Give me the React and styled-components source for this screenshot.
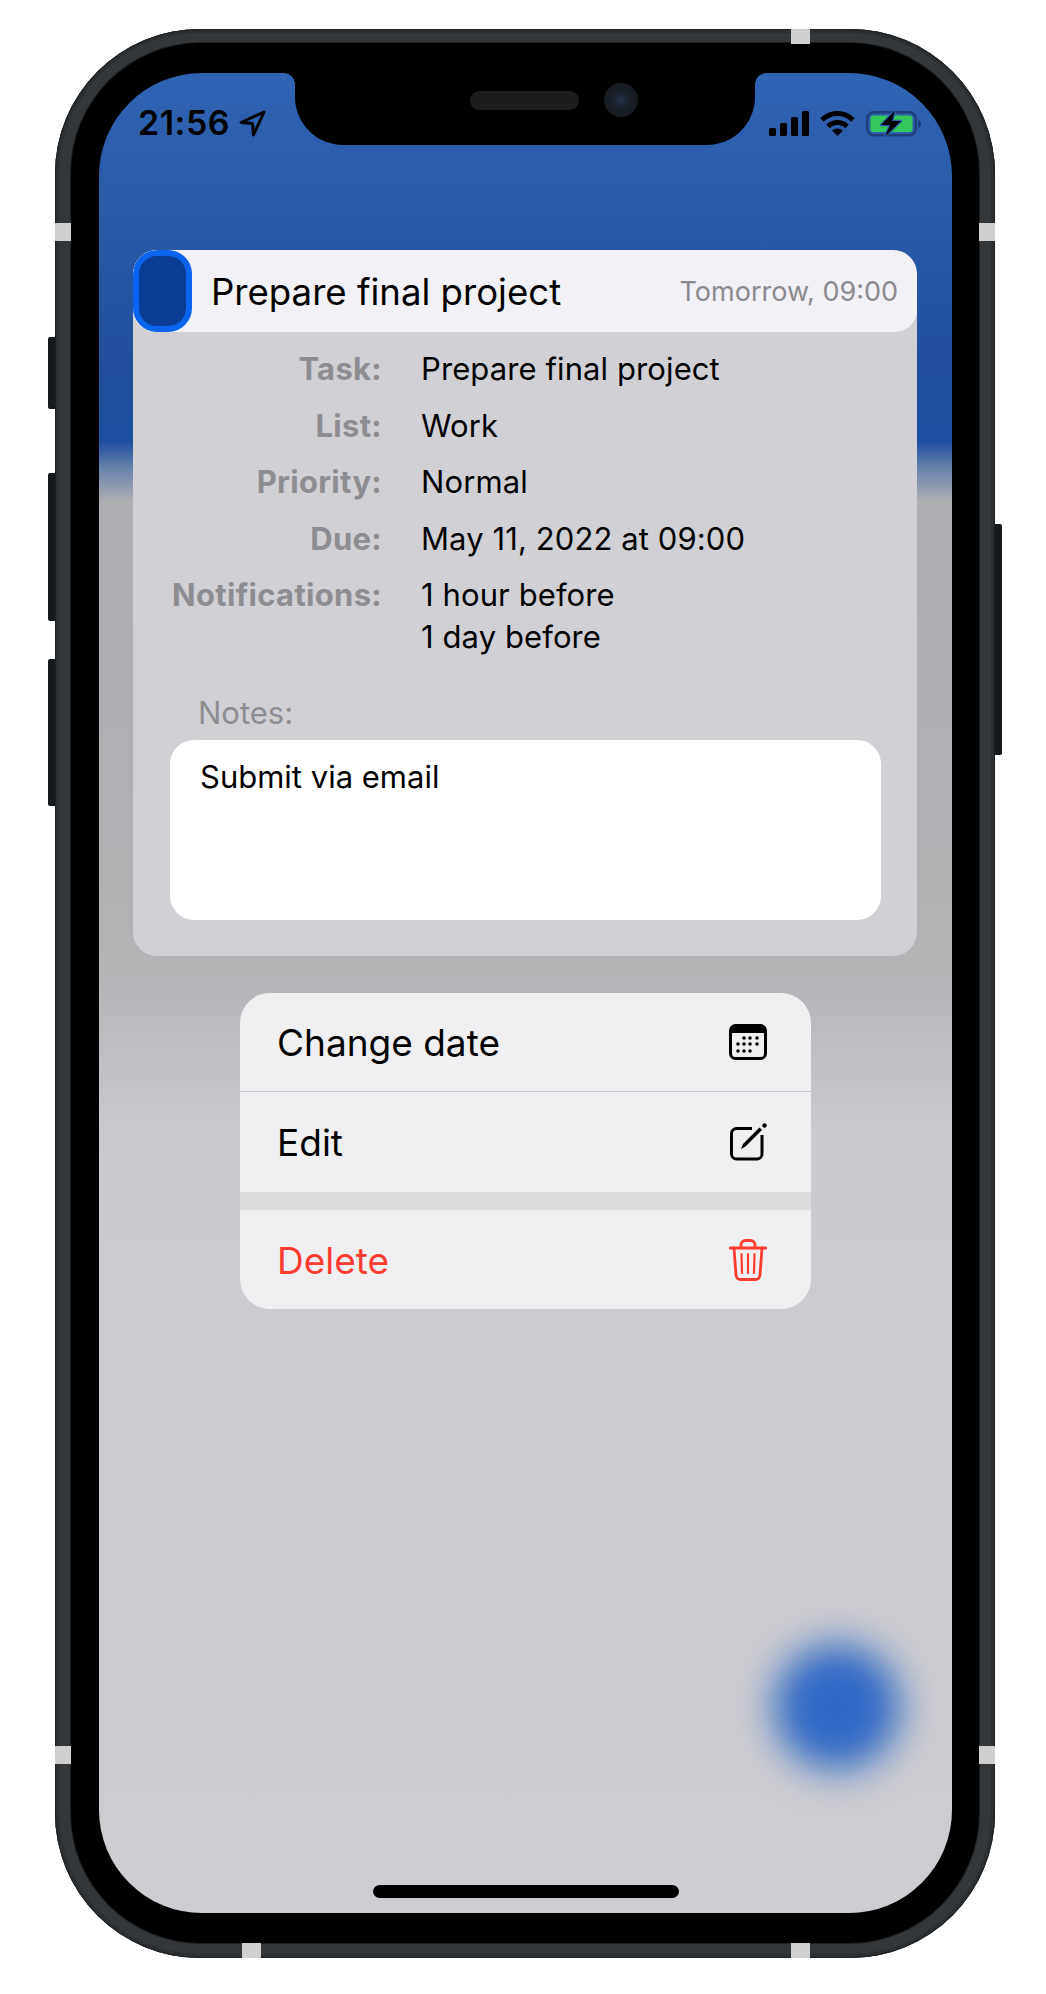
import React from "react";
import styled, { createGlobalStyle } from "styled-components";

const Global = createGlobalStyle`
  html, body { margin: 0; padding: 0; background: #fff; }
  body { font-family: Inter, "Liberation Sans", sans-serif; color: #000; }
`;

const Page = styled.div`
  width: 1046px;
  height: 1994px;
  padding: 29px 0 0 55px;
  box-sizing: border-box;
  overflow: hidden;
`;

const Phone = styled.div`
  position: relative;
  width: 940px;
  height: 1929px;
  box-sizing: border-box;
  padding: 14px 16px 15px 16px;
  border-radius: 145px;
  background: #33373a;
  box-shadow: inset 0 0 0 1px #1d2022, inset 0 0 0 4px #2b2f32;
`;

const Bezel = styled.div`
  height: 100%;
  box-sizing: border-box;
  padding: 30px 27px 30px 28px;
  border-radius: 130px;
  background: #000;
  box-shadow: 0 0 0 1px #1c1f22;
`;

const Screen = styled.div`
  position: relative;
  height: 100%;
  border-radius: 103px;
  overflow: hidden;
  display: flex;
  flex-direction: column;
  background: linear-gradient(
    180deg,
    #2f64b4 0,
    #2a5ca9 120px,
    #1f4f9c 300px,
    #1b4e9f 368px,
    #6a83ab 396px,
    #adaeb2 428px,
    #b1b1b4 800px,
    #b4b4b7 900px,
    #cbcacf 1060px,
    #cecdd2 1840px
  );
`;

const Notch = styled.div`
  position: absolute;
  top: 0;
  left: 196px;
  width: 460px;
  height: 72px;
  background: #000;
  border-radius: 0 0 48px 48px;
  &::before, &::after {
    content: "";
    position: absolute;
    top: 0;
    width: 11px;
    height: 11px;
  }
  &::before {
    left: -11px;
    background: radial-gradient(circle at 0 100%, transparent 10.5px, #000 11px);
  }
  &::after {
    right: -11px;
    background: radial-gradient(circle at 100% 100%, transparent 10.5px, #000 11px);
  }
`;

const Speaker = styled.div`
  position: absolute;
  top: 18px;
  left: 175px;
  width: 109px;
  height: 19px;
  border-radius: 10px;
  background: #1d1d1e;
`;

const Camera = styled.div`
  position: absolute;
  top: 10px;
  left: 309px;
  width: 34px;
  height: 34px;
  border-radius: 50%;
  background: radial-gradient(circle, #23344a 0, #1a2029 35%, #15171a 100%);
`;

const StatusBar = styled.div`
  flex: none;
  height: 177px;
  box-sizing: border-box;
  padding: 36px 31px 0 39px;
  display: flex;
  justify-content: space-between;
  align-items: flex-start;
`;

const TimeGroup = styled.div`
  display: flex;
  align-items: center;
  gap: 9px;
  height: 28px;
`;

const Time = styled.span`
  font-size: 34px;
  font-weight: 600;
  line-height: 28px;
  letter-spacing: 0.5px;
  color: #000;
`;

const StatusIcons = styled.div`
  display: flex;
  align-items: center;
  gap: 11px;
  height: 28px;
`;

const Card = styled.section`
  flex: none;
  margin: 0 35px 0 34px;
  height: 706px;
  display: flex;
  flex-direction: column;
  border-radius: 24px;
  overflow: hidden;
  background: #d1d0d5;
`;

const CardHeader = styled.header`
  flex: none;
  height: 82px;
  display: flex;
  align-items: center;
  background: #f2f1f6;
  border-radius: 24px 24px 22px 22px;
`;

const Swatch = styled.div`
  flex: none;
  width: 59px;
  height: 82px;
  box-sizing: border-box;
  border: 6px solid #0a64ee;
  border-radius: 24px;
  background: #093c93;
`;

const Title = styled.h1`
  flex: 1;
  margin: 0 0 0 19px;
  padding-top: 1px;
  font-size: 36.6px;
  font-weight: 400;
  line-height: 44px;
  color: #000;
`;

const When = styled.span`
  margin-right: 19px;
  font-size: 27px;
  font-weight: 400;
  color: #8a8a8e;
`;

const Details = styled.dl`
  flex: none;
  margin: 0;
  padding: 16px 0 0 0;
  display: grid;
  grid-template-columns: 249px 1fr;
  column-gap: 39px;
  row-gap: 14.5px;
`;

const Label = styled.dt`
  text-align: right;
  font-size: 31px;
  font-weight: 700;
  line-height: 42px;
  letter-spacing: 0.3px;
  color: #8d8d91;
`;

const Value = styled.dd`
  margin: 0;
  font-size: 31px;
  font-weight: 400;
  line-height: 42px;
  letter-spacing: 0.1px;
  color: #000;
`;

const NotesLabel = styled.div`
  margin: 34px 0 0 65px;
  font-size: 31px;
  line-height: 42px;
  color: #8d8d91;
`;

const NotesBox = styled.div`
  flex: none;
  margin: 6px 36px 0 37px;
  height: 180px;
  box-sizing: border-box;
  padding: 16px 30px;
  border-radius: 24px;
  background: #fff;
  font-size: 31px;
  line-height: 42px;
  color: #000;
`;

const Menu = styled.nav`
  flex: none;
  margin: 37px 0 0 141px;
  width: 571px;
  border-radius: 30px;
  overflow: hidden;
  background: #f0f0f2;
`;

const MenuRow = styled.div`
  height: ${(p) => p.$h}px;
  box-sizing: border-box;
  padding: 0 44px 0 37px;
  display: flex;
  align-items: center;
  justify-content: space-between;
  font-size: 37px;
  color: ${(p) => (p.$danger ? "#ff3b30" : "#000")};
  border-bottom: ${(p) => (p.$line ? "1px solid #c8c8cc" : "none")};
`;

const MenuLabel = styled.span`
  display: block;
  padding-top: 1px;
`;

const MenuGap = styled.div`
  height: 18px;
  background: #dcdcde;
`;

const Fab = styled.div`
  position: absolute;
  top: 1571px;
  left: 675px;
  width: 126px;
  height: 126px;
  border-radius: 50%;
  background: #2d68c5;
  filter: blur(19px);
`;

const HomeBar = styled.div`
  position: absolute;
  left: 274px;
  bottom: 15px;
  width: 306px;
  height: 13px;
  border-radius: 7px;
  background: #000;
`;

const Band = styled.div`
  position: absolute;
  background: #cfcfcf;
  ${(p) => (p.$top !== undefined ? `top:${p.$top}px;` : "")}
  ${(p) => (p.$left !== undefined ? `left:${p.$left}px;` : "")}
  ${(p) => (p.$right !== undefined ? `right:${p.$right}px;` : "")}
  ${(p) => (p.$bottom !== undefined ? `bottom:${p.$bottom}px;` : "")}
  width: ${(p) => (p.$horizontal ? 16 : 19)}px;
  height: ${(p) => (p.$horizontal ? 18 : 15)}px;
`;

const SideButton = styled.div`
  position: absolute;
  top: ${(p) => p.$top}px;
  ${(p) => (p.$side === "right" ? "right: -7px;" : "left: -7px;")}
  width: 7px;
  height: ${(p) => p.$h}px;
  background: #16191b;
  border-radius: ${(p) => (p.$side === "right" ? "0 2px 2px 0" : "2px 0 0 2px")};
`;

const Location = () => (
  <svg width="27" height="27" viewBox="0 0 27 27" fill="none">
    <path d="M25 2 L2 12.5 L13.5 13.5 L14.5 25 Z" stroke="#000" strokeWidth="3" strokeLinejoin="round" />
  </svg>
);

const Signal = () => (
  <svg width="40" height="25" viewBox="0 0 40 25">
    <rect x="0" y="17" width="7" height="8" rx="1.5" />
    <rect x="11" y="12" width="7" height="13" rx="1.5" />
    <rect x="22" y="6" width="7" height="19" rx="1.5" />
    <rect x="33" y="0" width="7" height="25" rx="1.5" />
  </svg>
);

const Wifi = () => (
  <svg width="35" height="25" viewBox="0 0 35 25" fill="none">
    <path d="M2 9 A22 22 0 0 1 33 9" stroke="#000" strokeWidth="5" />
    <path d="M8 15.5 A13.5 13.5 0 0 1 27 15.5" stroke="#000" strokeWidth="5" />
    <path d="M17.5 25 L12 19.5 Q17.5 15.5 23 19.5 Z" fill="#000" />
  </svg>
);

const Battery = () => (
  <svg width="55" height="27" viewBox="0 0 55 27" fill="none">
    <rect x="1.2" y="2.2" width="48.5" height="23" rx="6.5" stroke="#1d3e78" strokeWidth="2.4" />
    <rect x="4.5" y="5.5" width="42" height="16.5" rx="3" fill="#34c759" />
    <path d="M52 9.5 C54 10.5 55 12 55 13.7 C55 15.5 54 17 52 18 Z" fill="#1d3e78" />
    <path
      d="M29 0.5 L15 15 H24 L19 26.5 L35 11 H26 Z"
      fill="#000"
      stroke="#2c60ae"
      strokeWidth="2.5"
      strokeLinejoin="round"
      paintOrder="stroke"
    />
  </svg>
);

const CalendarIcon = () => (
  <svg width="38" height="36" viewBox="0 0 38 36" fill="none">
    <rect x="1.5" y="1.5" width="35" height="33" rx="5" stroke="#000" strokeWidth="3" />
    <path d="M1 9 V6 A5 5 0 0 1 6 1 H32 A5 5 0 0 1 37 6 V9 Z" fill="#000" />
    {[
      [15, 14], [21, 14], [28, 14],
      [9, 20], [15, 20], [21, 20], [28, 20],
      [9, 27], [15, 27], [21, 27],
    ].map(([x, y]) => (
      <circle key={`${x}-${y}`} cx={x} cy={y} r="1.8" fill="#000" />
    ))}
  </svg>
);

const EditIcon = () => (
  <svg width="37" height="38" viewBox="0 0 37 38" fill="none">
    <path
      d="M22 5.5 H6.5 A5 5 0 0 0 1.5 10.5 V31 A5 5 0 0 0 6.5 36 H27 A5 5 0 0 0 32 31 V12"
      stroke="#000"
      strokeWidth="3"
    />
    <path d="M11 26 L13 21 L29.5 4.5 L32 7 L15.5 23.5 Z" fill="#000" />
    <circle cx="34.5" cy="2.5" r="2.2" fill="#000" />
  </svg>
);

const TrashIcon = () => (
  <svg width="38" height="42" viewBox="0 0 38 42" fill="none" stroke="#ff3b30" strokeWidth="2.8" strokeLinecap="round">
    <path d="M1 9 H37" />
    <path d="M12 9 V6 A4.5 4.5 0 0 1 16.5 1.5 H21.5 A4.5 4.5 0 0 1 26 6 V9" />
    <path d="M5 9 L7 36 A4.5 4.5 0 0 0 11.5 40.5 H26.5 A4.5 4.5 0 0 0 31 36 L33 9" />
    <path d="M12.5 15 L13 34 M19 15 V34 M25.5 15 L25 34" strokeWidth="2.2" />
  </svg>
);

const rows = [
  ["Task:", "Prepare final project"],
  ["List:", "Work"],
  ["Priority:", "Normal"],
  ["Due:", "May 11, 2022 at 09:00"],
  ["Notifications:", <>1 hour before<br />1 day before</>],
];

export default function App() {
  return (
    <Page>
      <Global />
      <Phone>
        <SideButton $side="left" $top={308} $h={72} />
        <SideButton $side="left" $top={444} $h={148} />
        <SideButton $side="left" $top={630} $h={147} />
        <SideButton $side="right" $top={495} $h={231} />
        <Band $top={0} $left={736} $horizontal={false} />
        <Band $top={194} $left={0} $horizontal />
        <Band $top={194} $right={0} $horizontal />
        <Band $bottom={194} $left={0} $horizontal />
        <Band $bottom={194} $right={0} $horizontal />
        <Band $bottom={0} $left={187} $horizontal={false} />
        <Band $bottom={0} $left={736} $horizontal={false} />
        <Bezel>
          <Screen>
            <StatusBar>
              <TimeGroup>
                <Time>21:56</Time>
                <Location />
              </TimeGroup>
              <StatusIcons>
                <Signal />
                <Wifi />
                <Battery />
              </StatusIcons>
            </StatusBar>
            <Card>
              <CardHeader>
                <Swatch />
                <Title>Prepare final project</Title>
                <When>Tomorrow, 09:00</When>
              </CardHeader>
              <Details>
                {rows.map(([k, v]) => (
                  <React.Fragment key={k}>
                    <Label>{k}</Label>
                    <Value>{v}</Value>
                  </React.Fragment>
                ))}
              </Details>
              <NotesLabel>Notes:</NotesLabel>
              <NotesBox>Submit via email</NotesBox>
            </Card>
            <Menu>
              <MenuRow $h={99} $line>
                <MenuLabel>Change date</MenuLabel>
                <CalendarIcon />
              </MenuRow>
              <MenuRow $h={100}>
                <MenuLabel>Edit</MenuLabel>
                <EditIcon />
              </MenuRow>
              <MenuGap />
              <MenuRow $h={99} $danger>
                <MenuLabel>Delete</MenuLabel>
                <TrashIcon />
              </MenuRow>
            </Menu>
            <Fab />
            <HomeBar />
            <Notch>
              <Speaker />
              <Camera />
            </Notch>
          </Screen>
        </Bezel>
      </Phone>
    </Page>
  );
}
